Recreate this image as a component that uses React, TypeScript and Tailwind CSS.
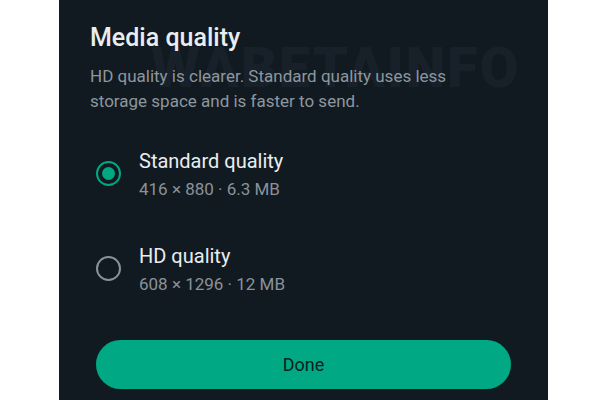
import React from 'react'

const options = [
  { label: 'Standard quality', meta: '416 × 880 · 6.3 MB', checked: true },
  { label: 'HD quality', meta: '608 × 1296 · 12 MB', checked: false },
]

const Radio = ({ checked }: { checked: boolean }) =>
  checked ? (
    <div className="mt-[13px] flex h-[25px] w-[25px] shrink-0 items-center justify-center rounded-full border-[2.5px] border-[#00a884]">
      <div className="h-[13px] w-[13px] rounded-full bg-[#00a884]" />
    </div>
  ) : (
    <div className="mt-[13px] h-[25px] w-[25px] shrink-0 rounded-full border-[2.5px] border-[#8a9299]" />
  )

export default function App() {
  return (
    <div className="flex h-[400px] w-[600px] bg-white font-['Roboto',sans-serif]">
      <div className="relative ml-[59px] h-full w-[489px] overflow-hidden bg-[#121a21] px-[31px] pt-[24px]">
        {/* watermark */}
        <div className="pointer-events-none absolute left-[92px] top-[40px] select-none text-[56px] font-black leading-none tracking-[2px] text-[#18212a]">
          WABETAINFO
        </div>
        <div className="relative">
          <h1 className="text-[25px] leading-[28px] font-medium text-[#e9edef]">Media quality</h1>
          <p className="mt-[12px] w-[380px] text-[17px] leading-[25px] text-[#8c979f]">
            HD quality is clearer. Standard quality uses less storage space and is faster to send.
          </p>
          <div className="mt-[34px] flex flex-col gap-[41px] pl-[6px]">
            {options.map((o) => (
              <div key={o.label} className="flex items-start gap-[18px]">
                <Radio checked={o.checked} />
                <div className="flex flex-col">
                  <span className="text-[20px] leading-[26px] text-[#e9edef]">{o.label}</span>
                  <span className="mt-[2px] text-[17px] leading-[26px] text-[#8a9299]">{o.meta}</span>
                </div>
              </div>
            ))}
          </div>
          <button className="mt-[43px] ml-[6px] flex h-[49px] w-[415px] items-center justify-center rounded-full bg-[#00a884] text-[18px] font-normal text-[#0b1f1c]">
            Done
          </button>
        </div>
      </div>
    </div>
  )
}
